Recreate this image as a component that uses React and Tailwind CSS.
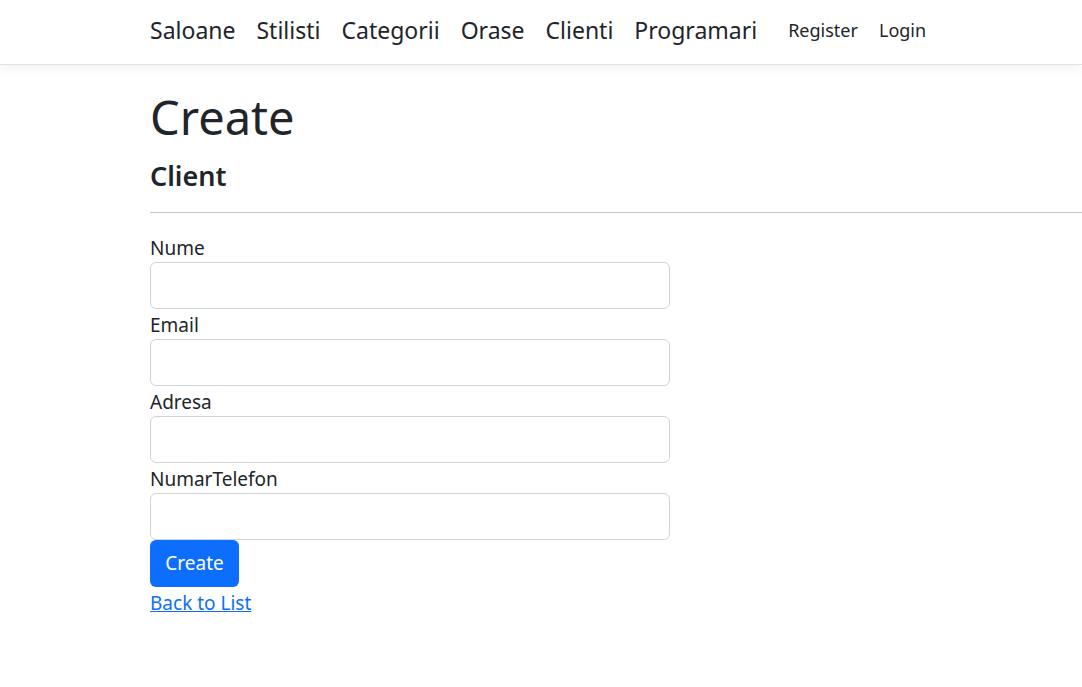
export default function App() {
  const navLinks = ['Saloane', 'Stilisti', 'Categorii', 'Orase', 'Clienti', 'Programari'];
  const fields = ['Nume', 'Email', 'Adresa', 'NumarTelefon'];

  return (
    <div className="min-h-screen bg-white text-[#212529]" style={{ fontFamily: '"Noto Sans", "Open Sans", sans-serif' }}>
      {/* Navbar */}
      <header className="h-[65px] border-b border-[#dee2e6] bg-white shadow-[0_4px_12px_rgba(0,0,0,0.05)]">
        <nav className="flex h-full items-center pl-[150px] pb-[4px]">
          <ul className="flex items-center gap-[21px] text-[23px]">
            {navLinks.map((l) => (
              <li key={l}>
                <a href="#" className="text-[#212529]">{l}</a>
              </li>
            ))}
          </ul>
          <ul className="ml-[31px] flex items-center gap-[21px] text-[18px]">
            <li><a href="#" className="text-[#212529]">Register</a></li>
            <li><a href="#" className="text-[#212529]">Login</a></li>
          </ul>
        </nav>
      </header>

      <main className="pl-[150px] pt-[23px]">
        <h1 className="text-[47px] font-normal leading-[58px]">Create</h1>
        <h4 className="mt-[13px] text-[27px] font-semibold leading-[34px]">Client</h4>
        <hr className="mt-[19px] border-t border-[#c6c7c8]" />

        <form className="mt-[19px] w-[520px]">
          {fields.map((f) => (
            <div key={f}>
              <label className="block pt-[2px] text-[19px] leading-[28px]">{f}</label>
              <input
                type="text"
                className="block h-[47px] w-full rounded-md border border-[#ced4da] bg-white px-3 outline-none"
              />
            </div>
          ))}
          <button
            type="button"
            className="block h-[47px] w-[89px] rounded-md bg-[#0d6efd] text-[19px] text-white"
          >
            Create
          </button>
        </form>

        <a href="#" className="block w-fit pt-[2px] text-[19px] leading-[28px] text-[#0d6efd] underline">
          Back to List
        </a>
      </main>
    </div>
  );
}
